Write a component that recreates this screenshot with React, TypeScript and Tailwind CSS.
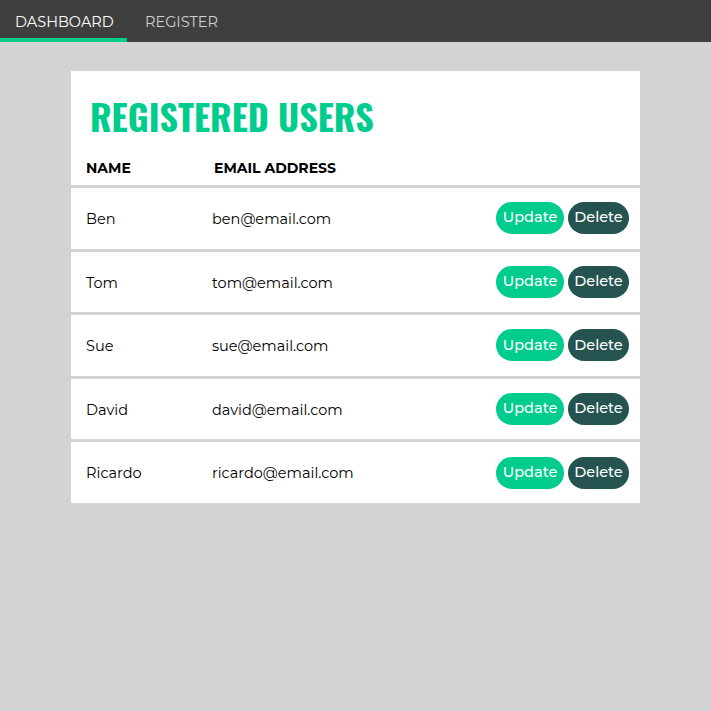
import React from "react";

const users = [
  { name: "Ben", email: "ben@email.com" },
  { name: "Tom", email: "tom@email.com" },
  { name: "Sue", email: "sue@email.com" },
  { name: "David", email: "david@email.com" },
  { name: "Ricardo", email: "ricardo@email.com" },
];

const body = { fontFamily: "Montserrat, 'Open Sans', 'Noto Sans', sans-serif" };
const title = {
  fontFamily: "Oswald, 'DejaVu Sans Condensed', 'Liberation Sans Narrow', sans-serif",
};

const App = () => {
  return (
    <div className="min-h-[711px] bg-[#d3d3d3]" style={body}>
      <nav className="flex h-[42px] bg-[#3f3f3f]">
        <div className="w-[127px] border-b-[4px] border-[#00cc8e] pl-[15px] pt-[13px] text-[14.5px] leading-[18px] text-white">
          DASHBOARD
        </div>
        <div className="pl-[18px] pt-[13px] text-[14.5px] leading-[18px] text-[#d0d0d0]">
          REGISTER
        </div>
      </nav>

      <div className="ml-[71px] mt-[29px] w-[569px] bg-white">
        <h1
          className="pl-[19px] pt-[21px] text-[36px] font-bold leading-[48px] text-[#00cc8e]"
          style={title}
        >
          REGISTERED USERS
        </h1>
        <div className="flex pl-[15px] pt-[21px] pb-[10px] text-[14px] font-bold leading-[14px] text-black">
          <span className="w-[128px]">NAME</span>
          <span>EMAIL ADDRESS</span>
        </div>
        {users.map((u) => (
          <div
            key={u.name}
            className="flex h-[63.6px] items-center border-t-[3px] border-[#d3d3d3] pl-[15px] pr-[11px] text-[14.5px] text-black"
          >
            <span className="w-[126px] pt-[3px]">{u.name}</span>
            <span className="flex-1 pt-[3px]">{u.email}</span>
            <div className="flex gap-[4px]">
              <button className="h-[32px] w-[68px] rounded-full bg-[#00cc8e] text-[14.5px] font-medium text-white">
                Update
              </button>
              <button className="h-[32px] w-[61px] rounded-full bg-[#245350] text-[14.5px] font-medium text-white">
                Delete
              </button>
            </div>
          </div>
        ))}
      </div>
    </div>
  );
};

export default App;
